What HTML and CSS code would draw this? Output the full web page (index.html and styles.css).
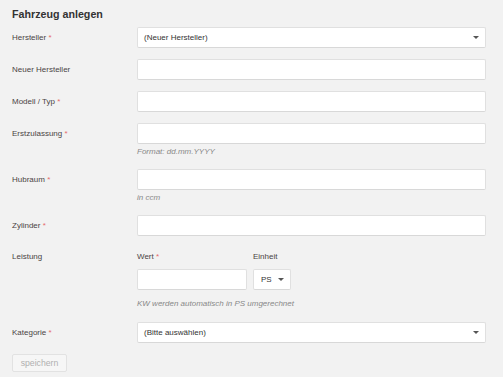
FILE: index.html
```html
<!DOCTYPE html>
<html lang="de">
<head>
<meta charset="utf-8">
<title>Fahrzeug anlegen</title>
<link rel="stylesheet" href="styles.css">
</head>
<body>
<div class="page">
  <h1 class="title">Fahrzeug anlegen</h1>
  <form class="form">
    <div class="field">
      <label class="label">Hersteller <span class="req">*</span></label>
      <div class="control">
        <div class="select"><span>(Neuer Hersteller)</span><i class="caret"></i></div>
      </div>
    </div>
    <div class="field">
      <label class="label">Neuer Hersteller</label>
      <div class="control"><div class="input"></div></div>
    </div>
    <div class="field">
      <label class="label">Modell / Typ <span class="req">*</span></label>
      <div class="control"><div class="input"></div></div>
    </div>
    <div class="field">
      <label class="label">Erstzulassung <span class="req">*</span></label>
      <div class="control">
        <div class="input"></div>
        <div class="help">Format: dd.mm.YYYY</div>
      </div>
    </div>
    <div class="field">
      <label class="label">Hubraum <span class="req">*</span></label>
      <div class="control">
        <div class="input"></div>
        <div class="help">in ccm</div>
      </div>
    </div>
    <div class="field">
      <label class="label">Zylinder <span class="req">*</span></label>
      <div class="control"><div class="input"></div></div>
    </div>
    <div class="field">
      <label class="label label-top">Leistung</label>
      <div class="control">
        <div class="group">
          <div class="sub">
            <div class="sublabel">Wert <span class="req">*</span></div>
            <div class="input input-wert"></div>
          </div>
          <div class="sub">
            <div class="sublabel">Einheit</div>
            <div class="select select-unit"><span>PS</span><i class="caret"></i></div>
          </div>
        </div>
        <div class="help help-kw">KW werden automatisch in PS umgerechnet</div>
      </div>
    </div>
    <div class="field">
      <label class="label">Kategorie <span class="req">*</span></label>
      <div class="control">
        <div class="select"><span>(Bitte auswählen)</span><i class="caret"></i></div>
      </div>
    </div>
    <div class="actions">
      <button type="button" class="btn" disabled>speichern</button>
    </div>
  </form>
</div>
</body>
</html>
```
FILE: styles.css
```css
html, body {
  margin: 0;
  padding: 0;
}
body {
  background: #f2f2f2;
  font-family: "Liberation Sans", Arial, sans-serif;
  font-size: 8px;
  color: #333;
  height: 377px;
  overflow: hidden;
}
.page {
  padding: 8px 17px 0 11px;
}
.title {
  margin: 0 0 6px 1px;
  font-size: 10.7px;
  line-height: 13px;
  font-weight: bold;
  color: #333;
}
.field {
  display: grid;
  grid-template-columns: 126px 1fr;
  margin-bottom: 11px;
}
.label {
  line-height: 21px;
  color: #4a4444;
  padding-left: 1px;
}
.label-top {
  line-height: 20px;
}
.req {
  color: #e56b6b;
}
.control {
  min-width: 0;
}
.input, .select {
  box-sizing: border-box;
  height: 21px;
  background: #fff;
  border: 1px solid #e0e0e0;
  border-bottom-color: #d8d8d8;
  border-radius: 2px;
}
.select {
  display: flex;
  align-items: center;
  justify-content: space-between;
  padding: 0 6px 0 6px;
  color: #333;
}
.caret {
  width: 0;
  height: 0;
  border-left: 3px solid transparent;
  border-right: 3px solid transparent;
  border-top: 3px solid #555;
  margin-right: 0;
}
.help {
  margin-top: 2px;
  line-height: 12px;
  font-style: italic;
  color: #888;
}
.help-kw {
  margin-top: 8px;
  margin-bottom: 1px;
}
.group {
  display: flex;
  gap: 6px;
}
.sublabel {
  line-height: 20px;
  margin-bottom: 2px;
  color: #4a4444;
}
.input-wert {
  width: 110px;
}
.select-unit {
  width: 38px;
  padding: 0 6px 0 7px;
}
.actions {
  padding-left: 1px;
}
.btn {
  box-sizing: border-box;
  width: 55px;
  height: 18px;
  padding: 0;
  font-family: "Liberation Sans", Arial, sans-serif;
  font-size: 8.7px;
  color: #b0b0b0;
  background: #f6f6f6;
  border: 1px solid #e2e2e2;
  border-radius: 2px;
}
```
